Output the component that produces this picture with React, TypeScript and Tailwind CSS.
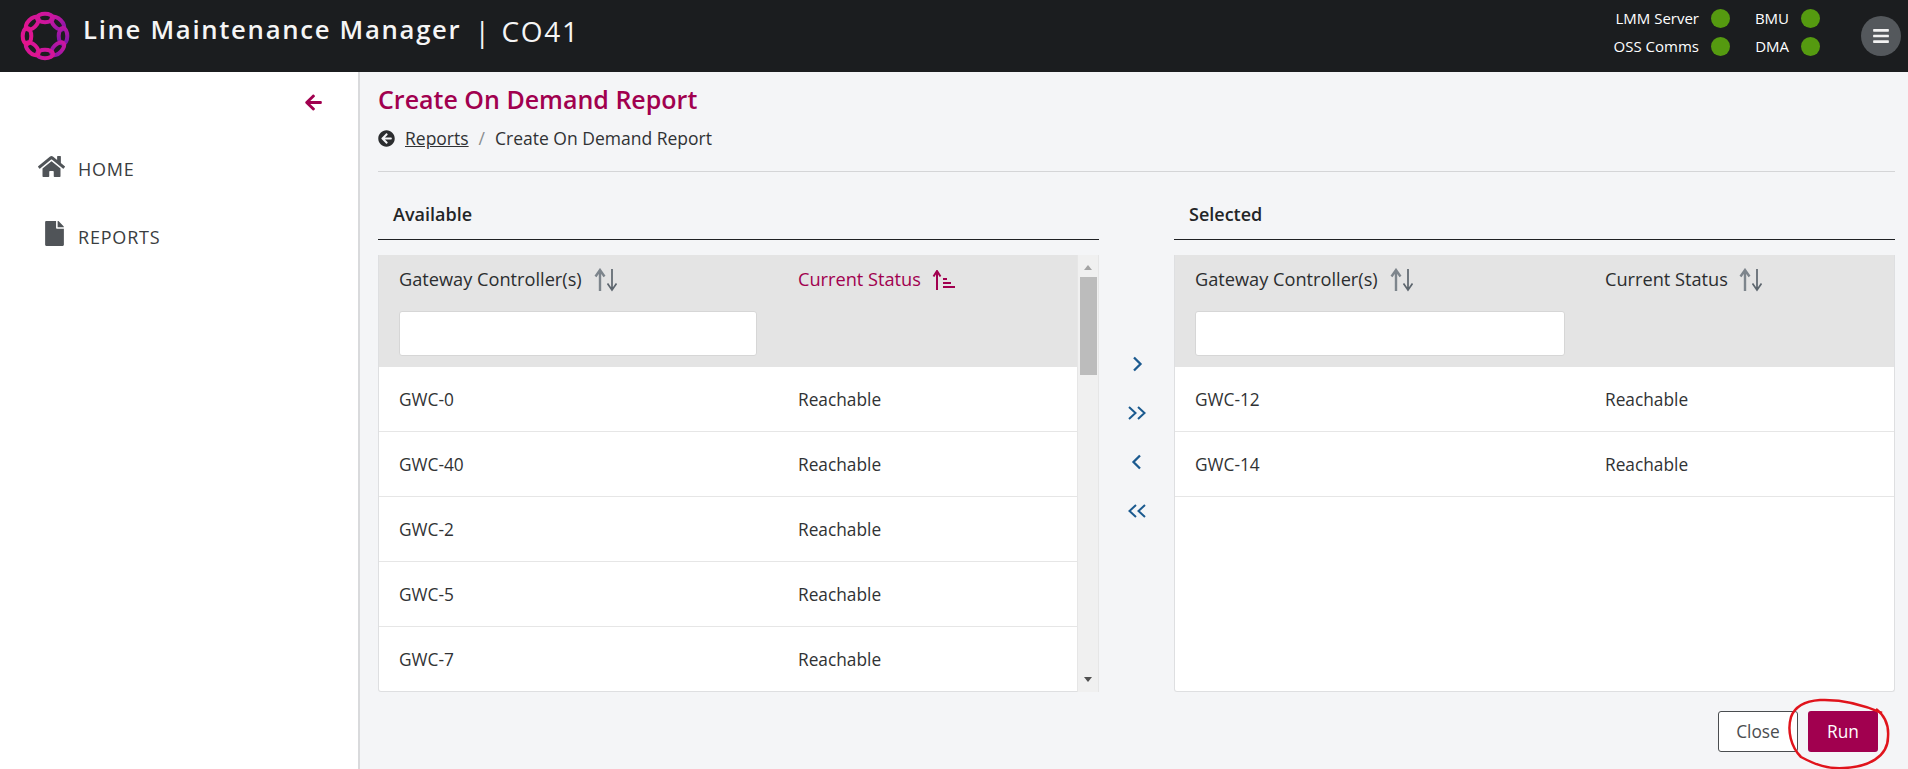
import React from 'react';
import { FaArrowLeft, FaArrowCircleLeft, FaBars, FaFile, FaHome } from 'react-icons/fa';

const availableRows = ['GWC-0', 'GWC-40', 'GWC-2', 'GWC-5', 'GWC-7'];
const selectedRows = ['GWC-12', 'GWC-14'];

// Ring of linked ovals used as the product logo
function Logo() {
    const links = [0, 45, 90, 135, 180, 225, 270, 315];
    return (
        <svg width="50" height="50" viewBox="0 0 50 50" className="shrink-0">
            <defs>
                <linearGradient id="logoGradient" gradientUnits="userSpaceOnUse" x1="0" y1="25" x2="50" y2="25">
                    <stop offset="0" stopColor="#e5148c" />
                    <stop offset="0.6" stopColor="#c916a0" />
                    <stop offset="1" stopColor="#7d17ab" />
                </linearGradient>
            </defs>
            <g fill="none" stroke="url(#logoGradient)" strokeWidth="4">
                {links.map((angle) => {
                    const rad = (angle * Math.PI) / 180;
                    const cx = 25 + 18 * Math.sin(rad);
                    const cy = 25 - 18 * Math.cos(rad);
                    return <ellipse key={angle} cx={cx} cy={cy} rx="8" ry="4.3" transform={`rotate(${angle} ${cx} ${cy})`} />;
                })}
            </g>
        </svg>
    );
}

function SortIcon() {
    return (
        <svg width="24" height="24" viewBox="0 0 24 24" className="shrink-0">
            <path d="M6 23V4M1.500 8.500 6 2l4.500 6.500" fill="none" stroke="#7d858c" strokeWidth="2.400" />
            <path d="M18 1v20M13.500 15.500 18 22l4.500-6.500" fill="none" stroke="#5d666e" strokeWidth="1.700" />
        </svg>
    );
}

function SortAscIcon() {
    return (
        <svg width="24" height="20" viewBox="0 0 24 20" className="shrink-0">
            <path d="M5 20V2M1.500 6.500 5 1l3.500 5.500" fill="none" stroke="#a1004f" strokeWidth="2" />
            <path d="M11 9h4M11 13h8M11 17h12" fill="none" stroke="#a1004f" strokeWidth="2" />
        </svg>
    );
}

function Status({ label, labelWidth }: { label: string; labelWidth: string }) {
    return (
        <div className="flex items-center gap-[12px]">
            <span className={`${labelWidth} text-right text-[15px] leading-[19px] whitespace-nowrap text-white`}>{label}</span>
            <span className="h-[19px] w-[19px] rounded-full bg-[#559a10]" />
        </div>
    );
}

function HeaderCell({ children, width }: { children: React.ReactNode; width: string }) {
    return <div className={`${width} pl-[20px]`}>{children}</div>;
}

function TablePanel({
    rows,
    statusColumn,
    filterWidth,
    sorted,
}: {
    rows: string[];
    statusColumn: string;
    filterWidth: string;
    sorted?: boolean;
}) {
    return (
        <div className="flex h-[437px] flex-col overflow-hidden rounded-b-[3px] border border-[#dedfe1] border-t-0 bg-white">
            <div className="flex h-[112px] shrink-0 bg-[#e4e4e4]">
                <HeaderCell width={statusColumn}>
                    <div className="mt-[13px] flex h-[24px] items-center gap-[12px] text-[18.200px] text-[#2b2d2f]">
                        Gateway Controller(s) <SortIcon />
                    </div>
                    <div className={`${filterWidth} mt-[19px] h-[45px] rounded-[3px] border border-[#d6d6d6] bg-white`} />
                </HeaderCell>
                <div className="flex-1">
                    <div className={`mt-[13px] flex h-[24px] items-center gap-[11px] text-[18.200px] ${sorted ? 'text-[#a1004f]' : 'text-[#2b2d2f]'}`}>
                        Current Status {sorted ? <SortAscIcon /> : <SortIcon />}
                    </div>
                </div>
            </div>
            {rows.map((row) => (
                <div key={row} className="flex h-[65px] shrink-0 items-center border-b border-[#e6e6e6] pt-[1px] text-[17.300px] text-[#303234]">
                    <div className={`${statusColumn} pl-[20px]`}>{row}</div>
                    <div className="flex-1">Reachable</div>
                </div>
            ))}
        </div>
    );
}

export default function App() {
    return (
        <div className="flex h-[769px] w-[1908px] flex-col overflow-hidden bg-[#f4f5f7] font-['Open_Sans',sans-serif]">
            {/* Top bar */}
            <header className="flex h-[72px] shrink-0 items-center bg-[#1b1d1f] pl-[20px] pr-[7px]">
                <Logo />
                <div className="mb-[11px] ml-[13px] flex items-center text-[25.700px] font-semibold tracking-[1.700px] text-[#f5f5f5]">
                    Line Maintenance Manager
                    <span className="ml-[13px] text-[28px] font-normal">| </span>
                    <span className="ml-[10px] text-[28px] font-normal">CO41</span>
                </div>
                <div className="mb-[7px] ml-auto flex flex-col gap-[9.500px]">
                    <div className="flex gap-[24px]">
                        <Status label="LMM Server" labelWidth="w-[98px]" />
                        <Status label="BMU" labelWidth="w-[35px]" />
                    </div>
                    <div className="flex gap-[24px]">
                        <Status label="OSS Comms" labelWidth="w-[98px]" />
                        <Status label="DMA" labelWidth="w-[35px]" />
                    </div>
                </div>
                <button className="ml-[41px] flex h-[40px] w-[40px] items-center justify-center rounded-full bg-[#54585c] text-[#f2f2f2]">
                    <FaBars size={18} />
                </button>
            </header>

            <div className="flex min-h-0 flex-1">
                {/* Side menu */}
                <aside className="w-[360px] shrink-0 border-r-2 border-[#d9dadc] bg-white">
                    <div className="flex justify-end pr-[35px] pt-[21px] text-[#a1004f]">
                        <FaArrowLeft size={19} />
                    </div>
                    <nav className="mt-[46px] flex flex-col gap-[46px] text-[18px] tracking-[0.800px] text-[#3a3d40]">
                        <div className="flex h-[22px] items-center pl-[38px]">
                            <FaHome size={27} className="mt-[-6px] text-[#505458]" />
                            <span className="ml-[13px]">HOME</span>
                        </div>
                        <div className="flex h-[22px] items-center pl-[42px]">
                            <FaFile size={25} className="mt-[-8px] text-[#505458]" />
                            <span className="ml-[11px]">REPORTS</span>
                        </div>
                    </nav>
                </aside>

                {/* Report builder */}
                <main className="min-w-0 flex-1 pl-[18px] pr-[13px]">
                    <h1 className="mt-[10px] text-[25px] leading-[34px] font-semibold text-[#a1004f]">Create On Demand Report</h1>
                    <div className="mt-[10px] flex h-[24px] items-center text-[17.500px] text-[#303234]">
                        <FaArrowCircleLeft size={17} className="text-[#2b2d2f]" />
                        <span className="ml-[10px] underline">Reports</span>
                        <span className="mx-[10px] text-[#8a8d90]">/</span>
                        <span>Create On Demand Report</span>
                    </div>
                    <div className="mt-[21px] border-t border-[#d4d5d7]" />

                    <div className="grid grid-cols-[721px_75px_721px]">
                        <div>
                            <div className="flex h-[68px] items-end border-b border-[#1f2123] pb-[11px] pl-[15px] text-[18px] font-semibold text-[#232527]">Available</div>
                            <div className="relative mt-[15px]">
                                <TablePanel rows={availableRows} statusColumn="w-[419px]" filterWidth="w-[358px]" sorted />
                                {/* Scrollbar sits over the table edge */}
                                <div className="absolute right-0 top-0 flex h-[437px] w-[22px] flex-col items-center border-x border-[#e6e6e6] bg-[#f0f0f0]">
                                    <span className="mt-[10px] h-0 w-0 border-x-[4px] border-b-[5px] border-x-transparent border-b-[#a3a3a3]" />
                                    <span className="mt-[7px] h-[98px] w-[17px] bg-[#bcbcbc]" />
                                    <span className="mb-[10px] mt-auto h-0 w-0 border-x-[4px] border-t-[5px] border-x-transparent border-t-[#505050]" />
                                </div>
                            </div>
                        </div>

                        <div className="flex flex-col items-center pt-[182px] text-[#1b5a8f]">
                            <svg width="20" height="20" viewBox="0 0 20 20" fill="none" stroke="currentColor" strokeWidth="2.300">
                                <path d="M7 3.500 13.500 10 7 16.500" />
                            </svg>
                            <svg className="mt-[29px]" width="20" height="20" viewBox="0 0 20 20" fill="none" stroke="currentColor" strokeWidth="2">
                                <path d="M2 4l6.500 6L2 16M11 4l6.500 6L11 16" />
                            </svg>
                            <svg className="mt-[29px]" width="20" height="20" viewBox="0 0 20 20" fill="none" stroke="currentColor" strokeWidth="2.300">
                                <path d="M13 3.500 6.500 10 13 16.500" />
                            </svg>
                            <svg className="mt-[29px]" width="20" height="20" viewBox="0 0 20 20" fill="none" stroke="currentColor" strokeWidth="2">
                                <path d="M9 4l-6.500 6L9 16M18 4l-6.500 6L18 16" />
                            </svg>
                        </div>

                        <div>
                            <div className="flex h-[68px] items-end border-b border-[#1f2123] pb-[11px] pl-[15px] text-[18px] font-semibold text-[#232527]">Selected</div>
                            <div className="mt-[15px]">
                                <TablePanel rows={selectedRows} statusColumn="w-[430px]" filterWidth="w-[370px]" />
                            </div>
                        </div>
                    </div>

                    <div className="relative mt-[19px] flex justify-end gap-[10px] pr-[17px]">
                        <button className="h-[41px] w-[80px] rounded-[3px] border border-[#4a4d50] bg-white text-[17.300px] text-[#4a4d50]">Close</button>
                        <button className="h-[41px] w-[70px] rounded-[3px] bg-[#a1004f] text-[17.300px] text-white">Run</button>
                        {/* Hand drawn annotation round the Run button */}
                        <svg className="absolute right-[3px] top-[-14px]" width="106" height="74" viewBox="0 0 106 74" fill="none">
                            <path d="M96 16C78 8 58 2 34 3 20 4 9 9 5 20 1 34 5 50 15 60 30 68 42 72 58 71 82 70 102 60 102 40 103 28 98 18 90 12" stroke="#e0141c" strokeWidth="2.500" />
                        </svg>
                    </div>
                </main>
            </div>
        </div>
    );
}
